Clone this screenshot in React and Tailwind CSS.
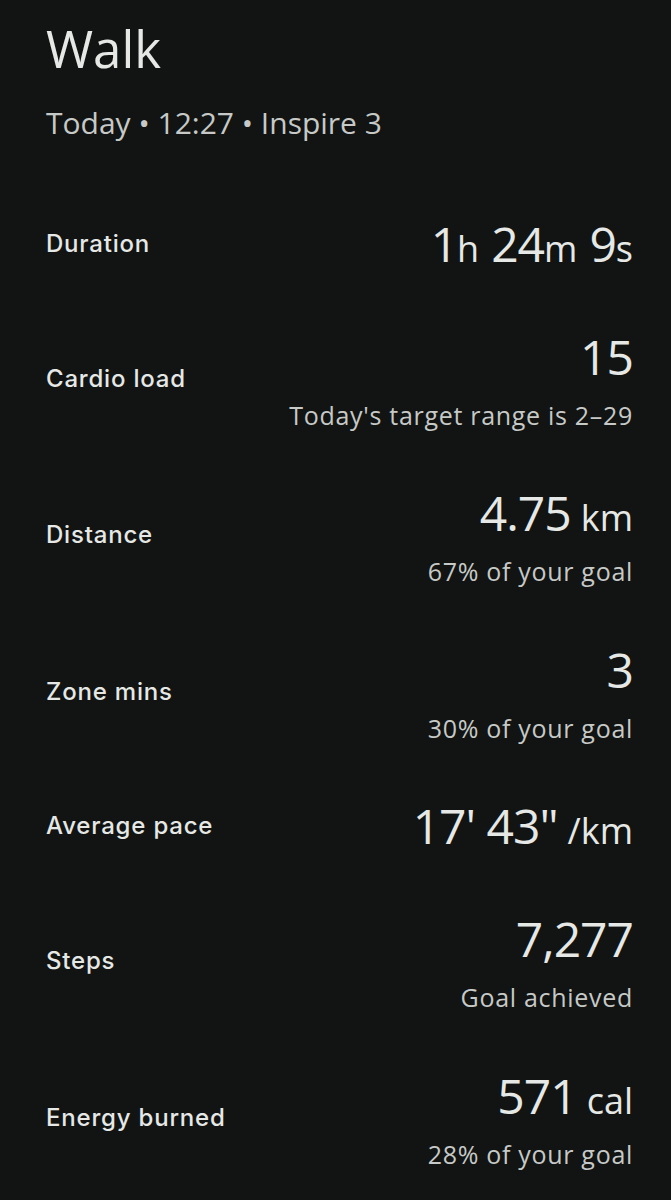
import React from 'react';

const stats = [
  { label: 'Duration', value: [['1', 'h'], ['24', 'm'], ['9', 's']] },
  { label: 'Cardio load', value: [['15', '']], sub: "Today's target range is 2\u201329" },
  { label: 'Distance', value: [['4.75', 'km']], sub: '67% of your goal' },
  { label: 'Zone mins', value: [['3', '']], sub: '30% of your goal' },
  { label: 'Average pace', value: [["17' 43\"", '/km']] },
  { label: 'Steps', value: [['7,277', '']], sub: 'Goal achieved' },
  { label: 'Energy burned', value: [['571', 'cal']], sub: '28% of your goal' },
];

function Value({ parts }) {
  return (
    <div className="flex items-baseline justify-end h-[60px] leading-[60px] text-[#e6e8e6]">
      {parts.map(([num, unit], i) => (
        <span key={i} className={i > 0 ? 'ml-[12px]' : ''}>
          <span className="text-[48px] tracking-[-1px]">{num}</span>
          {unit && (
            <span className={`text-[36px] ${unit === 'km' || unit === 'cal' || unit === '/km' ? 'ml-[10px]' : ''}`}>
              {unit}
            </span>
          )}
        </span>
      ))}
    </div>
  );
}

function StatRow({ label, value, sub }) {
  return (
    <div className="flex items-center justify-between">
      <div className="font-['Inter',sans-serif] text-[24px] leading-[32px] font-medium tracking-[0.8px] text-[#e6e8e6]">
        {label}
      </div>
      <div className="flex flex-col items-end">
        <Value parts={value} />
        {sub && (
          <div className="mt-[12px] h-[32px] leading-[32px] text-[25px] tracking-[0.7px] text-[#c7c9c7]">{sub}</div>
        )}
      </div>
    </div>
  );
}

export default function App() {
  return (
    <div
      className="min-h-[1200px] w-full bg-[#111413] pl-[46px] pr-[38px] pt-[18px]"
      style={{ fontFamily: '"Open Sans", Roboto, sans-serif' }}
    >
      {/* Header */}
      <h1 className="text-[51px] leading-[60px] text-[#e6e8e6]">Walk</h1>
      <p className="mt-[26px] text-[30px] leading-[38px] text-[#c7c9c7]">
        Today • 12:27 • Inspire 3
      </p>

      {/* Stats */}
      <div className="mt-[72px] flex flex-col gap-[52.6px]">
        {stats.map((s) => (
          <StatRow key={s.label} {...s} />
        ))}
      </div>
    </div>
  );
}
